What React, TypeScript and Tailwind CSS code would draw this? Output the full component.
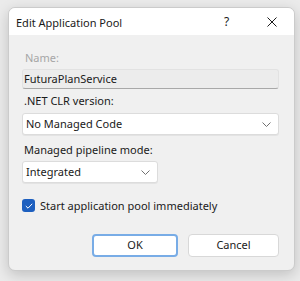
import React from "react";

const Chevron = () => (
  <svg width="9" height="5" viewBox="0 0 9 5" className="text-[#707070]">
    <path d="M0.5 0.5 L4.5 4.5 L8.5 0.5" fill="none" stroke="currentColor" strokeWidth="1" />
  </svg>
);

const App = () => {
  return (
    <main
      className="w-[300px] h-[281px] bg-[#ebebeb] pt-[7px] pl-[8px] text-[11px] text-[#1a1a1a]"
      style={{ fontFamily: '"Noto Sans", "Open Sans", sans-serif' }}
    >
      <div className="w-[287px] h-[264px] rounded-[7px] border border-[#cbcbcb] bg-[#f0f0f0] shadow-[0_4px_14px_rgba(0,0,0,0.18)] overflow-hidden flex flex-col">
        {/* title bar */}
        <div className="h-[27px] bg-white flex items-center pl-[7px] pt-[1px] shrink-0">
          <span className="flex-1 leading-none">Edit Application Pool</span>
          <span className="w-[12px] text-[12px] leading-none mr-[31px]">?</span>
          <span className="w-[11px] mr-[16px] flex">
            <svg width="10" height="10" viewBox="0 0 10 10">
              <path d="M0.5 0.5 L9.5 9.5 M9.5 0.5 L0.5 9.5" stroke="#1a1a1a" strokeWidth="1" />
            </svg>
          </span>
        </div>

        <div className="px-[13px] pt-[15px] flex flex-col">
          <div className="text-[#a6a6a6] leading-[16px] ml-[3px]">Name:</div>
          <div className="mt-[3px] h-[20px] w-[257px] bg-[#ececec] border border-[#e2e2e2] border-b-[#a8a8a8] rounded-[3px] flex items-center px-[1px]">
            FuturaPlanService
          </div>

          <div className="mt-[4px] leading-[16px] ml-[2px]">.NET CLR version:</div>
          <div className="mt-[4px] h-[22px] w-[257px] bg-white border border-[#dcdcdc] rounded-[3px] flex items-center pl-[3px] pr-[7px] shadow-[0_1px_0_rgba(0,0,0,0.05)]">
            <span className="flex-1">No Managed Code</span>
            <Chevron />
          </div>

          <div className="mt-[7px] leading-[16px] ml-[2px]">Managed pipeline mode:</div>
          <div className="mt-[3px] h-[22px] w-[136px] bg-white border border-[#dcdcdc] rounded-[3px] flex items-center pl-[3px] pr-[7px] shadow-[0_1px_0_rgba(0,0,0,0.05)]">
            <span className="flex-1">Integrated</span>
            <Chevron />
          </div>

          <div className="mt-[16px] flex items-center">
            <span className="w-[13px] h-[13px] rounded-[3px] bg-[#1d5fbf] flex items-center justify-center">
              <svg width="8" height="6" viewBox="0 0 8 6">
                <path d="M0.8 3 L3 5.2 L7.2 0.8" fill="none" stroke="white" strokeWidth="1" />
              </svg>
            </span>
            <span className="ml-[5px] leading-none">Start application pool immediately</span>
          </div>

          <div className="mt-[22px] flex justify-end gap-[10px] pr-[2px]">
            <button className="w-[86px] h-[23px] bg-white border-2 border-[#78ace6] rounded-[4px] flex items-center justify-center">
              OK
            </button>
            <button className="w-[91px] h-[23px] bg-white border border-[#d8d8d8] rounded-[4px] flex items-center justify-center">
              Cancel
            </button>
          </div>
        </div>
      </div>
    </main>
  );
};

export default App;
